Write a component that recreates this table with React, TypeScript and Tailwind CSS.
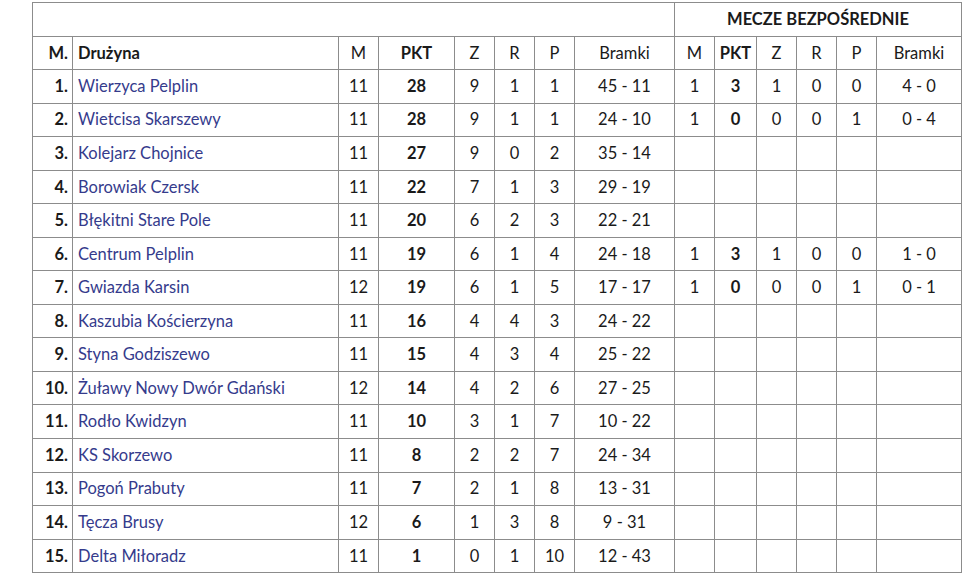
const teams: [string, number, number, number, number, number, string, (number | string)[] | null][] = [
  ['Wierzyca Pelplin', 11, 28, 9, 1, 1, '45 - 11', [1, 3, 1, 0, 0, '4 - 0']],
  ['Wietcisa Skarszewy', 11, 28, 9, 1, 1, '24 - 10', [1, 0, 0, 0, 1, '0 - 4']],
  ['Kolejarz Chojnice', 11, 27, 9, 0, 2, '35 - 14', null],
  ['Borowiak Czersk', 11, 22, 7, 1, 3, '29 - 19', null],
  ['Błękitni Stare Pole', 11, 20, 6, 2, 3, '22 - 21', null],
  ['Centrum Pelplin', 11, 19, 6, 1, 4, '24 - 18', [1, 3, 1, 0, 0, '1 - 0']],
  ['Gwiazda Karsin', 12, 19, 6, 1, 5, '17 - 17', [1, 0, 0, 0, 1, '0 - 1']],
  ['Kaszubia Kościerzyna', 11, 16, 4, 4, 3, '24 - 22', null],
  ['Styna Godziszewo', 11, 15, 4, 3, 4, '25 - 22', null],
  ['Żuławy Nowy Dwór Gdański', 12, 14, 4, 2, 6, '27 - 25', null],
  ['Rodło Kwidzyn', 11, 10, 3, 1, 7, '10 - 22', null],
  ['KS Skorzewo', 11, 8, 2, 2, 7, '24 - 34', null],
  ['Pogoń Prabuty', 11, 7, 2, 1, 8, '13 - 31', null],
  ['Tęcza Brusy', 12, 6, 1, 3, 8, '9 - 31', null],
  ['Delta Miłoradz', 11, 1, 0, 1, 10, '12 - 43', null],
];

const widths = [40, 266, 40, 76, 40, 40, 40, 100, 40, 42, 40, 40, 40, 85];

const cell = 'border border-[#8c8c8c] text-center p-0';

export default function App() {
  return (
    <div className="bg-white min-h-screen pt-[2px] pl-[32px] font-['Lato','Noto_Sans',sans-serif] text-[16.5px] text-[#1a1a1a]">
      <table className="table-fixed border-collapse w-[930px]">
        <colgroup>
          {widths.map((w, i) => (
            <col key={i} style={{ width: w }} />
          ))}
        </colgroup>
        <thead>
          <tr className="h-[34px]">
            <th colSpan={8} className={cell}></th>
            <th colSpan={6} className={`${cell} font-bold uppercase`}>Mecze bezpośrednie</th>
          </tr>
          <tr className="h-[33px]">
            <th className={`${cell} text-right pr-[4px] font-bold`}>M.</th>
            <th className={`${cell} text-left pl-[5px] font-bold`}>Drużyna</th>
            <th className={`${cell} font-normal`}>M</th>
            <th className={`${cell} font-bold`}>PKT</th>
            <th className={`${cell} font-normal`}>Z</th>
            <th className={`${cell} font-normal`}>R</th>
            <th className={`${cell} font-normal`}>P</th>
            <th className={`${cell} font-normal`}>Bramki</th>
            <th className={`${cell} font-normal`}>M</th>
            <th className={`${cell} font-bold`}>PKT</th>
            <th className={`${cell} font-normal`}>Z</th>
            <th className={`${cell} font-normal`}>R</th>
            <th className={`${cell} font-normal`}>P</th>
            <th className={`${cell} font-normal`}>Bramki</th>
          </tr>
        </thead>
        <tbody>
          {teams.map(([name, m, pkt, z, r, p, goals, h2h], i) => (
            <tr key={name} className="h-[33.55px]">
              <td className={`${cell} text-right pr-[4px] font-bold`}>{i + 1}.</td>
              <td className={`${cell} text-left pl-[5px] text-[#353b8c]`}>{name}</td>
              <td className={cell}>{m}</td>
              <td className={`${cell} font-bold`}>{pkt}</td>
              <td className={cell}>{z}</td>
              <td className={cell}>{r}</td>
              <td className={cell}>{p}</td>
              <td className={cell}>{goals}</td>
              {h2h
                ? h2h.map((v, j) => (
                    <td key={j} className={`${cell} ${j === 1 ? 'font-bold' : ''}`}>{v}</td>
                  ))
                : [0, 1, 2, 3, 4, 5].map((j) => <td key={j} className={cell}></td>)}
            </tr>
          ))}
        </tbody>
      </table>
    </div>
  );
}
